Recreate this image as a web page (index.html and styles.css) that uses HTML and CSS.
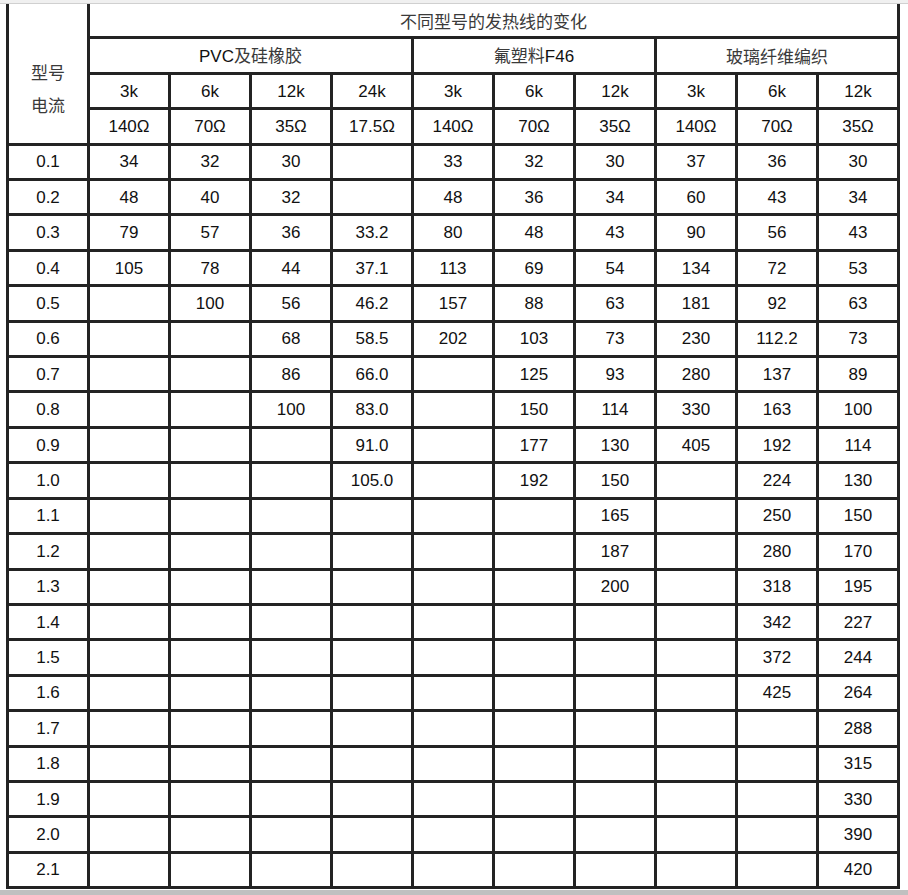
FILE: index.html
```html
<!DOCTYPE html>
<html lang="zh">
<head>
<meta charset="utf-8">
<title>不同型号的发热线的变化</title>
<link rel="stylesheet" href="styles.css">
</head>
<body>
<div class="top-strip"></div>
<main class="page">
<table class="grid">
<tbody>
<tr class="head">
  <td rowspan="4" class="corner"><span class="cn">型号</span><br><span class="cn">电流</span></td>
  <td colspan="10" class="cn">不同型号的发热线的变化</td>
</tr>
<tr class="head">
  <td colspan="4">PVC<span class="cn">及硅橡胶</span></td>
  <td colspan="3"><span class="cn">氟塑料</span>F46</td>
  <td colspan="3" class="cn">玻璃纤维编织</td>
</tr>
<tr class="head">
  <td>3k</td><td>6k</td><td>12k</td><td>24k</td><td>3k</td><td>6k</td><td>12k</td><td>3k</td><td>6k</td><td>12k</td>
</tr>
<tr class="head">
  <td>140Ω</td><td>70Ω</td><td>35Ω</td><td>17.5Ω</td><td>140Ω</td><td>70Ω</td><td>35Ω</td><td>140Ω</td><td>70Ω</td><td>35Ω</td>
</tr>
<tr><td>0.1</td><td>34</td><td>32</td><td>30</td><td></td><td>33</td><td>32</td><td>30</td><td>37</td><td>36</td><td>30</td></tr>
<tr><td>0.2</td><td>48</td><td>40</td><td>32</td><td></td><td>48</td><td>36</td><td>34</td><td>60</td><td>43</td><td>34</td></tr>
<tr><td>0.3</td><td>79</td><td>57</td><td>36</td><td>33.2</td><td>80</td><td>48</td><td>43</td><td>90</td><td>56</td><td>43</td></tr>
<tr><td>0.4</td><td>105</td><td>78</td><td>44</td><td>37.1</td><td>113</td><td>69</td><td>54</td><td>134</td><td>72</td><td>53</td></tr>
<tr><td>0.5</td><td></td><td>100</td><td>56</td><td>46.2</td><td>157</td><td>88</td><td>63</td><td>181</td><td>92</td><td>63</td></tr>
<tr><td>0.6</td><td></td><td></td><td>68</td><td>58.5</td><td>202</td><td>103</td><td>73</td><td>230</td><td>112.2</td><td>73</td></tr>
<tr><td>0.7</td><td></td><td></td><td>86</td><td>66.0</td><td></td><td>125</td><td>93</td><td>280</td><td>137</td><td>89</td></tr>
<tr><td>0.8</td><td></td><td></td><td>100</td><td>83.0</td><td></td><td>150</td><td>114</td><td>330</td><td>163</td><td>100</td></tr>
<tr><td>0.9</td><td></td><td></td><td></td><td>91.0</td><td></td><td>177</td><td>130</td><td>405</td><td>192</td><td>114</td></tr>
<tr><td>1.0</td><td></td><td></td><td></td><td>105.0</td><td></td><td>192</td><td>150</td><td></td><td>224</td><td>130</td></tr>
<tr><td>1.1</td><td></td><td></td><td></td><td></td><td></td><td></td><td>165</td><td></td><td>250</td><td>150</td></tr>
<tr><td>1.2</td><td></td><td></td><td></td><td></td><td></td><td></td><td>187</td><td></td><td>280</td><td>170</td></tr>
<tr><td>1.3</td><td></td><td></td><td></td><td></td><td></td><td></td><td>200</td><td></td><td>318</td><td>195</td></tr>
<tr><td>1.4</td><td></td><td></td><td></td><td></td><td></td><td></td><td></td><td></td><td>342</td><td>227</td></tr>
<tr><td>1.5</td><td></td><td></td><td></td><td></td><td></td><td></td><td></td><td></td><td>372</td><td>244</td></tr>
<tr><td>1.6</td><td></td><td></td><td></td><td></td><td></td><td></td><td></td><td></td><td>425</td><td>264</td></tr>
<tr><td>1.7</td><td></td><td></td><td></td><td></td><td></td><td></td><td></td><td></td><td></td><td>288</td></tr>
<tr><td>1.8</td><td></td><td></td><td></td><td></td><td></td><td></td><td></td><td></td><td></td><td>315</td></tr>
<tr><td>1.9</td><td></td><td></td><td></td><td></td><td></td><td></td><td></td><td></td><td></td><td>330</td></tr>
<tr><td>2.0</td><td></td><td></td><td></td><td></td><td></td><td></td><td></td><td></td><td></td><td>390</td></tr>
<tr><td>2.1</td><td></td><td></td><td></td><td></td><td></td><td></td><td></td><td></td><td></td><td>420</td></tr>
</tbody>
</table>
</main>
<div class="bottom-strip"></div>
</body>
</html>
```

FILE: styles.css
```css
html, body {
  margin: 0;
  padding: 0;
  background: #ffffff;
}

body {
  font-family: "Liberation Sans", "Noto Sans CJK SC", sans-serif;
  font-size: 17px;
  color: #111111;
}

.top-strip {
  height: 3px;
  background: #f0f0f0;
  border-bottom: 1px solid #d0d0d0;
}

.page {
  padding: 0 8px 0 6px;
}

.grid {
  width: 894px;
  table-layout: fixed;
  border-collapse: separate;
  border-spacing: 0;
  border-left: 3px solid #232323;
}

.grid tr {
  height: 35.42px;
}

.grid td {
  border-right: 3px solid #232323;
  border-bottom: 3px solid #232323;
  padding: 1px 0 0 0;
  text-align: center;
  vertical-align: middle;
  line-height: 20px;
  white-space: nowrap;
}

.cn {
  font-family: "Noto Sans CJK SC", sans-serif;
  color: #3a3a3a;
  font-size: 17px;
}

.grid td.corner {
  padding-top: 31px;
  line-height: 31px;
  vertical-align: middle;
}

.bottom-strip {
  margin-top: 1px;
  height: 10px;
  background: #c0c0c0;
}
```
